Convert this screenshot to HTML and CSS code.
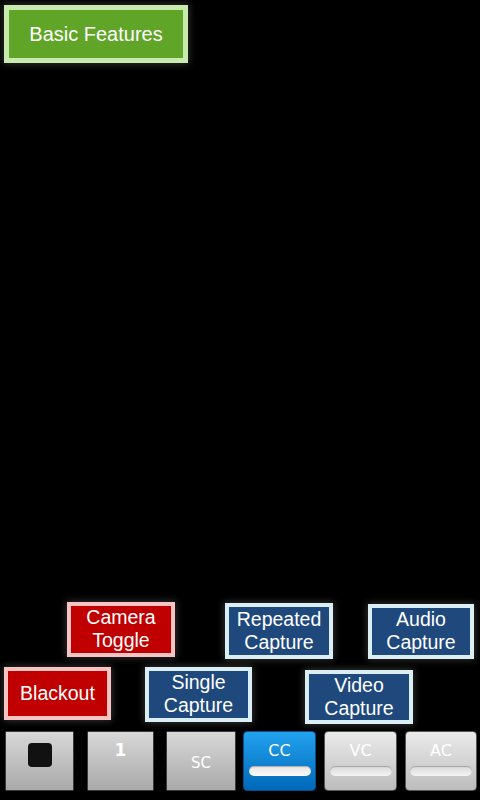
FILE: index.html
```html
<!DOCTYPE html>
<html>
<head>
<meta charset="utf-8">
<link rel="stylesheet" href="styles.css">
</head>
<body>
<div class="screen">
  <div class="topbar">
    <div class="btn green feature">Basic Features</div>
  </div>
  <div class="preview">
    <div class="btn red float camera">Camera<br>Toggle</div>
    <div class="btn blue float repeated">Repeated<br>Capture</div>
    <div class="btn blue float audio">Audio<br>Capture</div>
    <div class="btn red float blackout">Blackout</div>
    <div class="btn blue float single">Single<br>Capture</div>
    <div class="btn blue float video">Video<br>Capture</div>
  </div>
  <div class="toolbar">
    <div class="tb gray w1"><span class="stop"></span></div>
    <div class="tb gray w2"><span class="num">1</span></div>
    <div class="tb gray w3"><span class="sc">SC</span></div>
    <div class="tb toggle on w4"><span class="lbl">CC</span><span class="pill"></span></div>
    <div class="tb toggle w5"><span class="lbl">VC</span><span class="pill"></span></div>
    <div class="tb toggle w6"><span class="lbl">AC</span><span class="pill"></span></div>
  </div>
</div>
</body>
</html>
```
FILE: styles.css
```css
html, body { margin: 0; padding: 0; background: #000; }
.screen {
  position: relative;
  width: 480px;
  height: 800px;
  background: #000;
  display: flex;
  flex-direction: column;
  overflow: hidden;
  font-family: "Liberation Sans", Arial, sans-serif;
}
.topbar { padding: 5px 0 0 4px; }
.btn {
  box-sizing: border-box;
  border: 4px solid;
  color: #fff;
  display: flex;
  align-items: center;
  justify-content: center;
  text-align: center;
  font-size: 19.5px;
  line-height: 23px;
  padding-bottom: 1px;
  box-shadow: 0 0 7px 1px rgba(90, 90, 90, 0.55);
}
.green { background: #60a428; border-color: #c9eaae; }
.red { background: #c00000; border-color: #f7c3c3; }
.blue { background: #1f497d; border-color: #dbeef3; }
.feature {
  width: 184px;
  height: 58px;
  border-width: 5px;
  font-size: 20px;
  padding-bottom: 0;
}
.preview { flex: 1; }
.float { position: absolute; }
.camera { left: 67px; top: 602px; width: 108px; height: 55px; }
.repeated { left: 225px; top: 603px; width: 108px; height: 56px; }
.audio { left: 368px; top: 604px; width: 106px; height: 55px; }
.blackout { left: 4px; top: 667px; width: 107px; height: 53px; }
.single { left: 145px; top: 667px; width: 107px; height: 55px; }
.video { left: 305px; top: 670px; width: 108px; height: 54px; }

.toolbar {
  display: flex;
  height: 60px;
  padding: 0 3px 9px 5px;
  font-family: "DejaVu Sans", "Noto Sans", sans-serif;
}
.tb {
  box-sizing: border-box;
  height: 60px;
  position: relative;
  display: flex;
  flex-direction: column;
  align-items: center;
}
.w1 { width: 69px; margin-right: 13px; }
.w2 { width: 67px; margin-right: 12px; }
.w3 { width: 70px; margin-right: 7px; }
.w4 { width: 73px; margin-right: 8px; }
.w5 { width: 73px; margin-right: 8px; }
.w6 { width: 72px; }
.gray {
  background: linear-gradient(#d8d8d8, #a9a9a9);
  border: 1px solid #3a3a3a;
  border-radius: 1px;
}
.stop {
  width: 24px;
  height: 24px;
  margin-top: 11px;
  background: #111;
  border-radius: 4px;
}
.num {
  color: #fff;
  font-weight: bold;
  font-size: 17px;
  margin-top: 8px;
}
.sc {
  color: #fff;
  font-size: 15px;
  margin-top: 22px;
}
.toggle {
  border-radius: 4px;
  background: linear-gradient(#ebebeb, #bcbcbc);
  border: 1px solid #555;
}
.toggle.on {
  background: linear-gradient(#22a2ef, #0068b8);
  border-color: #0a4e8a;
}
.lbl {
  color: #fff;
  font-size: 16px;
  margin-top: 9px;
  line-height: 20px;
}
.pill {
  width: 62px;
  height: 10px;
  margin-top: 5px;
  border-radius: 5px;
  background: linear-gradient(#d8d8d8, #f4f4f4);
  box-shadow: inset 0 1px 1px rgba(0, 0, 0, 0.25);
}
.toggle.on .pill { background: linear-gradient(#e6e6e6, #fafafa); }
```
